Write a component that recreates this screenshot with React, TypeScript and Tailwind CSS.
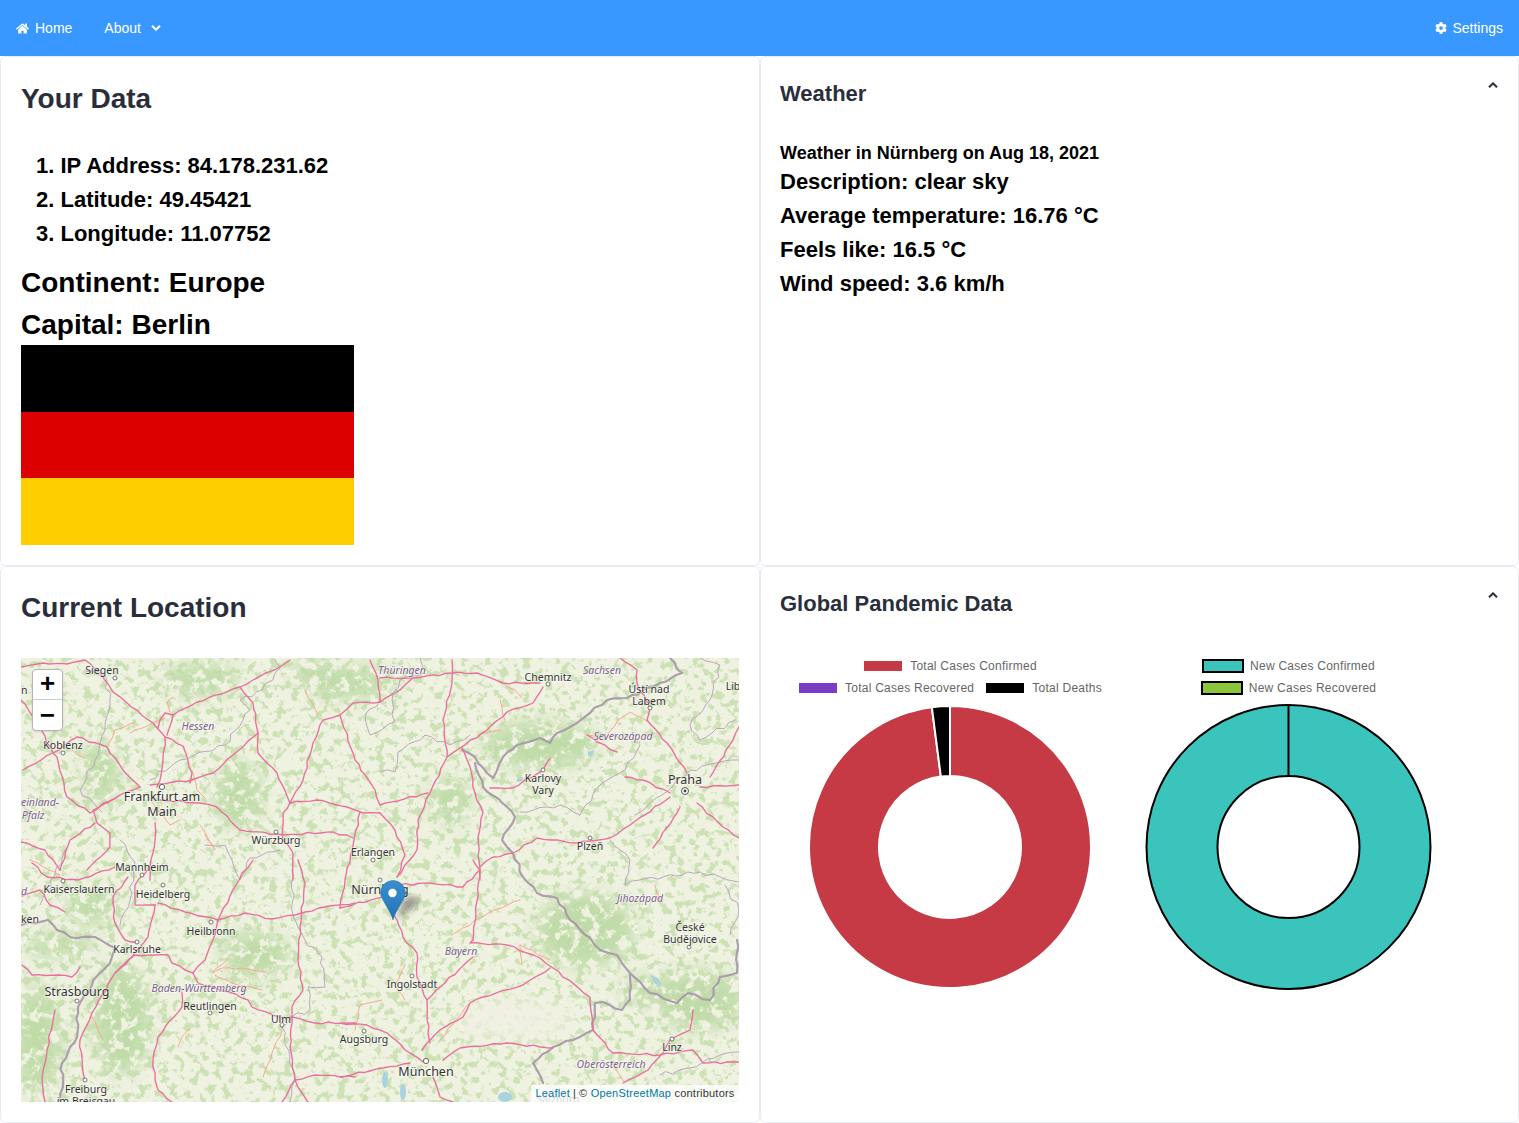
import { FaHome, FaCog, FaChevronDown, FaChevronUp } from 'react-icons/fa';

const motorways = [
  '22,667 43,663 67,664 85,660 100,673 113,692 127,703 147,719 157,728 165,737 183,746 192,773 190,783',
  '165,737 163,760 160,780 157,787',
  '173,715 165,713 160,720 158,728',
  '173,715 167,735',
  '173,715 197,702 240,687 253,680 283,665 290,660',
  '240,687 253,703 258,733 233,755 213,773 192,780 173,782 150,785',
  '258,733 258,753 277,773 290,803 283,813 283,840 293,853 293,880',
  '290,803 293,797 303,780 313,743 323,720 340,715 353,703 380,702',
  '290,803 317,800 347,807 363,813 380,813',
  '120,795 93,810 97,823 110,833 110,847 87,870',
  '155,823 155,840 150,867 150,880',
  '140,787 120,795 90,813 67,797 57,757 53,753 23,770',
  '53,753 77,737 107,747 123,770 140,787',
  '160,800 200,803 217,807 240,830 283,835 333,832 353,838',
  '380,678 413,678 452,673 477,673 503,683 540,683',
  '452,660 452,683 443,720 447,757 430,793 418,820 417,850 397,877',
  '543,687 533,703 507,712 487,730 460,748 447,757',
  '462,748 470,767 475,793 483,813 478,837 480,880',
  '380,805 428,793',
  '480,867 493,857 513,853 537,838 577,843 610,838 630,825 670,797',
  '625,777 643,780 670,793',
  '710,777 733,740 739,727',
  '700,787 739,785',
  '697,803 723,827 739,838',
  '653,848 677,813 680,807',
  '620,658 637,670 637,683 650,708 647,720 667,743 687,773',
  '490,788 513,788 543,770 550,758',
  '587,735 597,742 617,752',
  '340,908 383,897 400,885 430,883 463,887 480,870 473,860',
  '383,897 397,920 403,937 417,953 417,977 427,1000 428,1033 430,1043',
  '480,870 473,940 470,943 507,945 540,958 553,968 590,997 593,1030 613,1053 660,1055 693,1050 703,1063 739,1062',
  '473,957 440,987 427,1000',
  '550,968 523,985 483,997 470,1003 463,1017 440,1030 427,1043 422,1050',
  '340,1023 367,1025 387,1033 410,1053 423,1062',
  '443,1060 460,1048 507,1043 540,1047 553,1048',
  '340,1077 383,1068 410,1063',
  '693,1010 690,1030 670,1040 663,1053 648,1070 623,1083',
  '433,1077 440,1097 453,1102',
  '32,863 47,877 78,880 115,867',
  '113,903 115,923 125,940 137,942',
  '128,877 113,897 113,903',
  '155,905 148,937 132,957 115,973 92,1013 80,1040 83,1073 85,1080',
  '158,903 185,912 218,920 245,913 272,919 295,915 305,912 325,907 355,903',
  '218,920 242,873 253,860',
  '218,920 213,940 205,960 193,973 172,963 168,955 155,955 135,955 115,973',
  '193,973 198,983 228,992 248,1000 252,1007 278,1017 292,1017',
  '182,993 182,1007 165,1027 158,1037 153,1060 155,1080 158,1090 172,1102',
  '298,860 305,883 300,927 298,960 303,990 292,1007 292,1017 290,1047 295,1080 302,1093 308,1102',
  '292,1017 315,1023 355,1023',
  '295,1080 315,1075 355,1077',
  '22,965 32,975 58,975 72,977 80,967',
  '55,1010 47,1050 42,1080 45,1102',
  '295,1080 282,1102',
  '22,896 40,890 50,905 65,912',
  '150,867 135,885 135,905 155,905',
  '380,702 400,690 413,678',
  '340,715 355,760 375,790 380,805',
  '360,812 352,850 345,880 340,908',
  '380,813 395,830 405,855 397,877',
  '370,660 378,680 380,702',
  '21,700 36,720 53,753',
  '95,823 70,840 60,870',
  '21,842 45,850 60,870',
];

const secondary = [
  '130,733 165,718',
  '173,697 167,702 170,712',
  '108,745 115,730 135,722',
  '192,770 197,790 205,798',
  '212,973 228,958',
  '212,973 222,968 242,968 265,972',
  '215,975 232,983 262,990',
  '178,1047 182,1037 190,1028',
  '103,1040 92,1017',
  '282,1030 272,1053 263,1077',
  '440,1040 470,1003',
  '405,965 395,985 405,1000',
  '382,1000 360,1005 355,1030',
  '452,935 490,912 520,900',
  '550,960 520,945',
  '520,945 522,965',
  '587,735 605,740 618,720 630,712 648,722',
  '503,683 515,690 522,698',
  '500,700 505,720',
  '30,860 60,875',
  '85,758 72,750',
  '625,1083 610,1062',
  '660,900 655,885',
  '478,735 500,730',
  '200,825 215,850 205,835',
  '150,800 170,825 180,820',
  '305,690 318,715',
];

const borders = [
  '670,658 682,673 660,683 627,698 607,700 590,713 577,723 557,733 550,743 540,738 517,745 503,757 493,778 487,773 475,757 462,750',
  '475,763 483,787 507,807 515,817 502,840 513,853 523,877 537,893 557,898 570,920 590,938 600,950 617,955 630,973 650,993 677,1003 688,993 710,1000 720,977 737,973 737,940',
  '630,973 630,1000 622,1010 603,1002 595,1003 593,1030 573,1040 553,1047 533,1063 543,1083',
  '22,925 48,920 57,930 70,937 95,937 115,948 110,963 98,975 78,1007 77,1037 62,1063 63,1087 60,1102',
];

const regional = [
  '292,870 293,915 305,940 322,957 325,987 308,987 310,1010 292,1017 282,1027 295,1080 290,1102',
  '420,658 425,672 400,680 392,700 395,722 370,735 365,715 380,700',
  '275,660 280,668 262,690 240,700 250,710 225,745 180,760 150,780',
  '85,672 105,675 110,700 105,730 95,760 80,790 102,812',
  '205,845 225,845 232,860 240,880 250,858 280,850',
  '470,735 450,745 425,735 398,752 395,772 380,772',
  '635,815 662,795 690,770 720,762 739,760',
  '640,745 625,770 600,785 580,815 560,805 520,812',
  '610,840 630,860 625,885 640,880 700,872 739,882',
  '700,658 720,665 710,700 690,725 700,740 735,720',
  '660,1075 690,1068 720,1055 739,1052',
  '65,850 55,875 40,905',
  '120,840 135,862 130,900 120,925',
  '725,885 739,910 730,935',
];

const cities: [number, number][] = [
  [115, 678], [63, 753], [276, 832], [373, 860], [142, 875], [63, 881], [163, 885],
  [211, 922], [137, 942], [77, 1001], [210, 1013], [282, 1025], [364, 1031], [412, 976], [380, 880],
  [548, 684], [650, 708], [543, 770], [590, 838], [689, 947], [672, 1039], [85, 1080],
];

const labels: { text: string; x: number; y: number; big?: boolean; region?: boolean }[] = [
  { text: 'Siegen', x: 102, y: 674 },
  { text: 'nn', x: 21, y: 694 },
  { text: 'Koblenz', x: 63, y: 749 },
  { text: 'Hessen', x: 198, y: 730, region: true },
  { text: 'Frankfurt am', x: 162, y: 801, big: true },
  { text: 'Main', x: 162, y: 816, big: true },
  { text: 'einland-', x: 40, y: 806, region: true },
  { text: 'Pfalz', x: 33, y: 819, region: true },
  { text: 'Würzburg', x: 276, y: 844 },
  { text: 'Erlangen', x: 373, y: 856 },
  { text: 'Mannheim', x: 142, y: 871 },
  { text: 'Kaiserslautern', x: 79, y: 893 },
  { text: 'Heidelberg', x: 163, y: 898 },
  { text: 'Heilbronn', x: 211, y: 935 },
  { text: 'Karlsruhe', x: 137, y: 953 },
  { text: 'ken', x: 30, y: 923 },
  { text: 'd', x: 24, y: 895, region: true },
  { text: 'Strasbourg', x: 77, y: 996, big: true },
  { text: 'Baden-Württemberg', x: 199, y: 992, region: true },
  { text: 'Reutlingen', x: 210, y: 1010 },
  { text: 'Ulm', x: 281, y: 1023 },
  { text: 'Augsburg', x: 364, y: 1043 },
  { text: 'Ingolstadt', x: 412, y: 988 },
  { text: 'Nürnberg', x: 380, y: 894, big: true },
  { text: 'München', x: 426, y: 1076, big: true },
  { text: 'Bayern', x: 461, y: 955, region: true },
  { text: 'Thüringen', x: 402, y: 674, region: true },
  { text: 'Chemnitz', x: 548, y: 681 },
  { text: 'Sachsen', x: 602, y: 674, region: true },
  { text: 'Ústí nad', x: 649, y: 693 },
  { text: 'Labem', x: 649, y: 705 },
  { text: 'Lib', x: 733, y: 690 },
  { text: 'Severozápad', x: 623, y: 740, region: true },
  { text: 'Karlovy', x: 543, y: 782 },
  { text: 'Vary', x: 543, y: 794 },
  { text: 'Praha', x: 685, y: 784, big: true },
  { text: 'Plzeň', x: 590, y: 850 },
  { text: 'Jihozápad', x: 640, y: 902, region: true },
  { text: 'České', x: 690, y: 931 },
  { text: 'Budějovice', x: 690, y: 943 },
  { text: 'Oberösterreich', x: 611, y: 1068, region: true },
  { text: 'Linz', x: 672, y: 1051 },
  { text: 'Freiburg', x: 86, y: 1093 },
  { text: 'im Breisgau', x: 86, y: 1105 },
  { text: 'Salzburg', x: 558, y: 1103 },
];

// dense forest areas, the noise layer only shows through these
const forests: [number, number, number, number][] = [
  [92, 906, 26, 18], [122, 1020, 30, 55], [38, 1040, 24, 55], [585, 930, 50, 38], [540, 745, 58, 24],
  [350, 683, 50, 16], [238, 795, 24, 34], [100, 772, 18, 34], [450, 800, 20, 24], [660, 990, 40, 14],
  [200, 680, 40, 16], [320, 672, 32, 12], [700, 1000, 45, 30], [60, 945, 36, 12], [255, 955, 34, 24],
];

// map lines wander a bit, straight segments look wrong
function wiggle(points: string, amp: number) {
  const pts = points.split(' ').map((p) => p.split(',').map(Number));
  const out: string[] = [];
  pts.forEach(([x, y], i) => {
    out.push(`${x},${y}`);
    const next = pts[i + 1];
    if (!next) return;
    const dx = next[0] - x;
    const dy = next[1] - y;
    const len = Math.hypot(dx, dy);
    const steps = Math.floor(len / 6);
    for (let s = 1; s < steps; s++) {
      const t = s / steps;
      const off = amp * (Math.sin(x * 0.7 + s * 1.9) + 0.6 * Math.sin(y * 0.3 + s * 3.1));
      out.push(`${x + dx * t - (dy / len) * off},${y + dy * t + (dx / len) * off}`);
    }
  });
  return out.join(' ');
}

function Map() {
  return (
    <div className="relative mt-[29px] h-[444px] w-[718px] overflow-hidden bg-[#f2efe9]">
      <svg viewBox="21 658 718 444" className="block h-full w-full" style={{ fontFamily: '"Noto Sans", sans-serif' }}>
        <defs>
          <filter id="mottle" x="0" y="0" width="100%" height="100%" colorInterpolationFilters="sRGB">
            <feTurbulence type="fractalNoise" baseFrequency="0.13" numOctaves="5" seed="7" />
            <feColorMatrix values="0 0 0 0 0.8  0 0 0 0 0.885  0 0 0 0 0.71  9 0 0 0 -4.75" />
          </filter>
          <filter id="mottleDense" x="0" y="0" width="100%" height="100%" colorInterpolationFilters="sRGB">
            <feTurbulence type="fractalNoise" baseFrequency="0.1" numOctaves="4" seed="21" />
            <feColorMatrix values="0 0 0 0 0.75  0 0 0 0 0.86  0 0 0 0 0.66  9 0 0 0 -3.5" />
          </filter>
          <filter id="soft">
            <feGaussianBlur stdDeviation="9" />
          </filter>
          <filter id="pinShadow">
            <feGaussianBlur stdDeviation="3" />
          </filter>
          <mask id="forestMask">
            <g filter="url(#soft)" fill="#fff">
              {forests.map(([cx, cy, rx, ry], i) => (
                <ellipse key={i} cx={cx} cy={cy} rx={rx} ry={ry} />
              ))}
            </g>
          </mask>
          <linearGradient id="pin" x1="0" y1="0" x2="0" y2="1">
            <stop offset="0" stopColor="#3a8fd0" />
            <stop offset="1" stopColor="#2272b4" />
          </linearGradient>
        </defs>

        <rect x="21" y="658" width="718" height="444" fill="#f0f2e1" />
        <rect x="21" y="658" width="718" height="444" filter="url(#mottle)" />
        <rect x="21" y="658" width="718" height="444" filter="url(#mottleDense)" mask="url(#forestMask)" />
        <ellipse cx="515" cy="1020" rx="62" ry="22" fill="#f1f0e4" filter="url(#soft)" opacity="0.8" />

        <g fill="#aad3df">
          <ellipse cx="385" cy="1080" rx="3" ry="8" />
          <ellipse cx="403" cy="1092" rx="3" ry="8" />
          <ellipse cx="505" cy="1097" rx="7" ry="5" />
          <path d="M650 975l8 3 4 8-7-2-5-9z" />
          <path d="M588 752l6-2-1 5-5 1z" />
          <path d="M517 779l6-2-1 4-5 1z" />
        </g>

        <g fill="none" strokeLinejoin="round" strokeLinecap="round">
          <g stroke="#b9a8bd" strokeWidth="1">
            {regional.map((p, i) => (
              <polyline key={i} points={wiggle(p, 1.5)} />
            ))}
          </g>
          <g stroke="#a697a8" strokeWidth="2.2" opacity="0.9">
            {borders.map((p, i) => (
              <polyline key={i} points={wiggle(p, 1.1)} />
            ))}
          </g>
          <g stroke="#f9a98e" strokeWidth="1">
            {secondary.map((p, i) => (
              <polyline key={i} points={wiggle(p, 0.7)} />
            ))}
          </g>
          <g stroke="#ea6f9c" strokeWidth="1.35">
            {motorways.map((p, i) => (
              <polyline key={i} points={wiggle(p, 0.7)} />
            ))}
          </g>
        </g>

        {cities.map(([x, y], i) => (
          <circle key={i} cx={x} cy={y} r="2" fill="#fff" stroke="#555" strokeWidth="0.8" />
        ))}
        <circle cx="685" cy="791" r="3.5" fill="#fff" stroke="#444" strokeWidth="0.9" />
        <circle cx="685" cy="791" r="1.4" fill="#444" />
        <circle cx="162" cy="787" r="2.6" fill="#fff" stroke="#555" strokeWidth="0.9" />
        <circle cx="426" cy="1061" r="2.6" fill="#fff" stroke="#555" strokeWidth="0.9" />

        {labels.map((l) => (
          <text
            key={l.text}
            x={l.x}
            y={l.y}
            textAnchor="middle"
            fontSize={l.big ? 12.5 : 10.5}
            fontStyle={l.region ? 'italic' : 'normal'}
            fill={l.region ? '#7e5f8c' : '#333'}
            stroke="#fff"
            strokeOpacity="0.6"
            strokeWidth="1.4"
            paintOrder="stroke"
          >
            {l.text}
          </text>
        ))}

        {/* marker */}
        <path d="M398 919l20-14c3-4 0-9-6-9-8 0-12 6-14 23z" fill="#000" opacity="0.35" filter="url(#pinShadow)" />
        <path
          d="M393 920c-3-11-12.500-21-12.500-27a12.500 12.500 0 0 1 25 0c0 6-9.500 16-12.500 27z"
          fill="url(#pin)"
          stroke="#2a6ea6"
          strokeWidth="0.5"
        />
        <circle cx="392.500" cy="893" r="4.200" fill="#fff" />
      </svg>

      <div className="absolute left-[11px] top-[11px] flex w-[31px] flex-col overflow-hidden rounded border border-[#b5b5b5] bg-white text-black shadow-sm">
        <div className="flex h-[30px] items-center justify-center border-b border-[#ccc] text-[26px] font-bold leading-none" style={{ fontFamily: '"Liberation Mono", monospace' }}>
          +
        </div>
        <div className="flex h-[30px] items-center justify-center pt-[3px] text-[26px] font-bold leading-none" style={{ fontFamily: '"Liberation Mono", monospace' }}>
          −
        </div>
      </div>

      <div className="absolute bottom-0 right-0 flex h-[17px] w-[208px] items-center justify-center bg-white/80 text-[11px] text-[#333] [font-family:'Liberation_Sans',sans-serif] tracking-[0.22px]">
        <span className="text-[#0078a8]">Leaflet</span>
        <span className="mx-[3px]">|</span>
        <span>©&nbsp;</span>
        <span className="text-[#0078a8]">OpenStreetMap</span>
        <span>&nbsp;contributors</span>
      </div>
    </div>
  );
}

function LegendItem({ color, border, label }: { color: string; border: string; label: string }) {
  return (
    <div className="flex items-center gap-[6px]">
      <span className={`h-[14px] w-[42px] border-2 ${border} ${color}`} />
      <span className="text-xs text-[#666] tracking-[0.25px]">{label}</span>
    </div>
  );
}

function arc(cx: number, cy: number, r: number, a0: number, a1: number, inner: number) {
  const pt = (rad: number, a: number) => {
    const t = ((a - 90) * Math.PI) / 180;
    return `${cx + rad * Math.cos(t)} ${cy + rad * Math.sin(t)}`;
  };
  const large = a1 - a0 > 180 ? 1 : 0;
  return `M${pt(r, a0)} A${r} ${r} 0 ${large} 1 ${pt(r, a1)} L${pt(inner, a1)} A${inner} ${inner} 0 ${large} 0 ${pt(inner, a0)} Z`;
}

function TotalChart() {
  return (
    <div className="w-[339px]">
      <div className="flex flex-col items-center gap-[6px]">
        <LegendItem color="bg-[#c53a44]" border="border-white" label="Total Cases Confirmed" />
        <div className="flex gap-[10px]">
          <LegendItem color="bg-[#7b3cc8]" border="border-white" label="Total Cases Recovered" />
          <LegendItem color="bg-black" border="border-white" label="Total Deaths" />
        </div>
      </div>
      <svg width="339" height="290" viewBox="0 0 339 290" className="mt-[5px] block">
        <path d={arc(170, 146, 141, 0, 352.6, 71)} fill="#c53a44" stroke="#fff" strokeWidth="2" />
        <path d={arc(170, 146, 141, 352.6, 360, 71)} fill="#000" stroke="#fff" strokeWidth="2" />
      </svg>
    </div>
  );
}

function NewChart() {
  return (
    <div className="w-[339px]">
      <div className="flex flex-col items-center gap-[6px]">
        <LegendItem color="bg-[#3bc4bb]" border="border-black" label="New Cases Confirmed" />
        <LegendItem color="bg-[#8cc63a]" border="border-black" label="New Cases Recovered" />
      </div>
      <svg width="339" height="290" viewBox="0 0 339 290" className="mt-[5px] block">
        <circle cx="169.500" cy="146" r="106.500" fill="none" stroke="#000" strokeWidth="73" />
        <circle cx="169.500" cy="146" r="106.500" fill="none" stroke="#3bc4bb" strokeWidth="69" />
        <line x1="169.500" y1="4" x2="169.500" y2="75" stroke="#000" strokeWidth="2" />
      </svg>
    </div>
  );
}

export default function App() {
  return (
    <div className="min-h-[1123px] bg-white text-black" style={{ fontFamily: '"Liberation Sans", Arial, sans-serif' }}>
      <nav className="flex h-14 items-center justify-between bg-[#3898ff] px-4 text-sm text-white">
        <div className="flex items-center">
          <a className="flex items-center gap-[6px]">
            <FaHome className="h-[13px] w-[13px]" />
            Home
          </a>
          <a className="ml-[32px] flex items-center gap-[10px]">
            About
            <FaChevronDown className="h-[10px] w-[10px] stroke-current stroke-[30]" />
          </a>
        </div>
        <a className="flex items-center gap-[5px]">
          <FaCog className="h-[12px] w-[12px]" />
          Settings
        </a>
      </nav>

      <main className="grid grid-cols-[760px_759px] grid-rows-[510px_557px]">
        <section className="rounded-md border border-[#e9ebf2] p-5">
          <h1 className="text-[28px] font-bold leading-[44px] text-[#2a2e3a]">Your Data</h1>
          <ol className="mt-[28px] pl-[15px] text-[22px] font-bold leading-[34px]">
            <li>1. IP Address: 84.178.231.62</li>
            <li>2. Latitude: 49.45421</li>
            <li>3. Longitude: 11.07752</li>
          </ol>
          <p className="mt-[11px] text-[28px] font-bold leading-[42px]">Continent: Europe</p>
          <p className="text-[28px] font-bold leading-[41px]">Capital: Berlin</p>
          <div className="flex h-[200px] w-[333px] flex-col">
            <div className="flex-1 bg-black" />
            <div className="flex-1 bg-[#d00]" />
            <div className="flex-1 bg-[#ffce00]" />
          </div>
        </section>

        <section className="rounded-md border border-[#e9ebf2] py-5 pl-[19px] pr-5">
          <div className="flex items-start justify-between">
            <h2 className="text-[22px] font-bold leading-[33px] text-[#2a2e3a]">Weather</h2>
            <FaChevronUp className="mt-[3px] h-[10px] w-[10px] stroke-current stroke-[30] text-[#2a2e3a]" />
          </div>
          <p className="mt-[31px] text-lg font-bold leading-[24px]">Weather in Nürnberg on Aug 18, 2021</p>
          <div className="text-[22px] font-bold leading-[34px]">
            <p>Description: clear sky</p>
            <p>Average temperature: 16.76 °C</p>
            <p>Feels like: 16.5 °C</p>
            <p>Wind speed: 3.6 km/h</p>
          </div>
        </section>

        <section className="rounded-md border border-[#e9ebf2] p-5">
          <h1 className="text-[28px] font-bold leading-[42px] text-[#2a2e3a]">Current Location</h1>
          <Map />
        </section>

        <section className="rounded-md border border-[#e9ebf2] py-5 pl-[19px] pr-5">
          <div className="flex items-start justify-between">
            <h2 className="text-[22px] font-bold leading-[33px] text-[#2a2e3a]">Global Pandemic Data</h2>
            <FaChevronUp className="mt-[3px] h-[10px] w-[10px] stroke-current stroke-[30] text-[#2a2e3a]" />
          </div>
          <div className="mt-[38px] flex">
            <TotalChart />
            <NewChart />
          </div>
        </section>
      </main>
    </div>
  );
}
